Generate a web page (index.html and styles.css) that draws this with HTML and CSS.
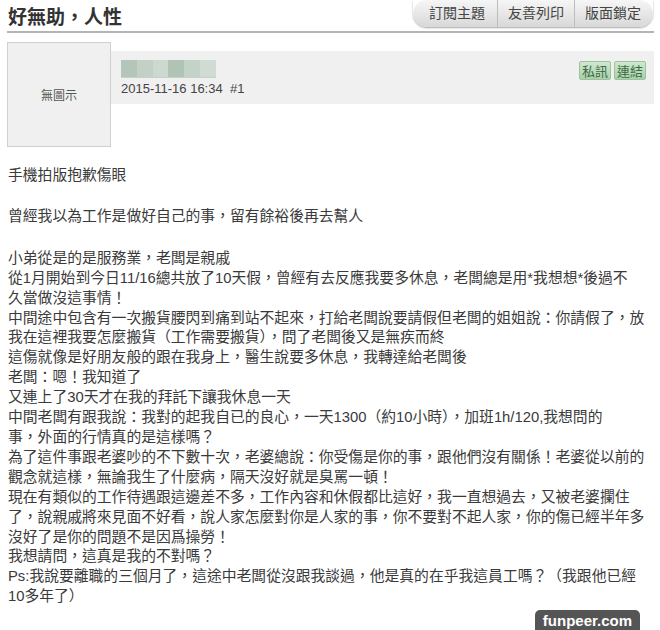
FILE: index.html
```html
<!DOCTYPE html>
<html lang="zh-Hant">
<head>
    <meta charset="UTF-8">
    <title>好無助，人性</title>
    <link rel="stylesheet" href="styles.css">
</head>
<body>
    <div class="page">
        <div class="topic-head">
            <h1 class="topic-title">好無助，人性</h1>
            <div class="tools">
                <a class="tool">訂閱主題</a>
                <a class="tool">友善列印</a>
                <a class="tool">版面鎖定</a>
            </div>
        </div>

        <div class="post">
            <div class="avatar">無圖示</div>
            <div class="post-bar">
                <div class="author">
                    <div class="name-blur">
                        <span class="b1"></span><span class="b2"></span><span class="b3"></span><span class="b4"></span><span class="b5"></span><span class="b6"></span>
                    </div>
                    <div class="post-date">2015-11-16 16:34&nbsp; #1</div>
                </div>
                <div class="post-actions">
                    <a class="act">私訊</a>
                    <a class="act">連結</a>
                </div>
            </div>
        </div>

        <div class="post-body">
            <p>手機拍版抱歉傷眼</p>
            <p>曾經我以為工作是做好自己的事，留有餘裕後再去幫人</p>
            <p>
                小弟從是的是服務業，老闆是親戚<br>
                從1月開始到今日11/16總共放了10天假，曾經有去反應我要多休息，老闆總是用*我想想*後過不<br>
                久當做沒這事情！<br>
                中間途中包含有一次搬貨腰閃到痛到站不起來，打給老闆說要請假但老闆的姐姐說：你請假了，放<br>
                我在這裡我要怎麼搬貨（工作需要搬貨），問了老闆後又是無疾而終<br>
                這傷就像是好朋友般的跟在我身上，醫生說要多休息，我轉達給老闆後<br>
                老闆：嗯！我知道了<br>
                又連上了30天才在我的拜託下讓我休息一天<br>
                中間老闆有跟我說：我對的起我自已的良心，一天1300（約10小時），加班1h/120,我想問的<br>
                事，外面的行情真的是這樣嗎？<br>
                為了這件事跟老婆吵的不下數十次，老婆總說：你受傷是你的事，跟他們沒有關係！老婆從以前的<br>
                觀念就這樣，無論我生了什麼病，隔天沒好就是臭罵一頓！<br>
                現在有類似的工作待遇跟這邊差不多，工作內容和休假都比這好，我一直想過去，又被老婆攔住<br>
                了，說親戚將來見面不好看，說人家怎麼對你是人家的事，你不要對不起人家，你的傷已經半年多<br>
                沒好了是你的問題不是因爲操勞！<br>
                我想請問，這真是我的不對嗎？<br>
                Ps:我說要離職的三個月了，這途中老闆從沒跟我談過，他是真的在乎我這員工嗎？（我跟他已經<br>
                10多年了）
            </p>
        </div>
    </div>

    <div class="watermark">funpeer.com</div>
</body>
</html>
```

FILE: styles.css
```css
body {
    margin: 0;
    background-color: #fff;
    color: #333;
    font-family: "Liberation Sans", "Noto Sans CJK TC", sans-serif;
}

.page {
    padding: 0 6px 0 7px;
}

.topic-head {
    display: flex;
    justify-content: space-between;
    align-items: flex-start;
    border-bottom: 2px solid #b4b4b4;
    height: 31px;
}

.topic-title {
    margin: 7px 0 0 1px;
    font-size: 19px;
    line-height: 22px;
    font-weight: bold;
    color: #333;
}

.tools {
    display: flex;
    margin-right: 1px;
    border-radius: 0 0 14px 14px;
    box-shadow: 0 1px 2px rgba(0, 0, 0, 0.35);
}

.tool {
    display: block;
    height: 27px;
    line-height: 26px;
    width: 76px;
    text-align: center;
    font-size: 14px;
    color: #444;
    background: linear-gradient(#f6f6f6, #d8d8d8);
    border-right: 1px solid #bdbdbd;
}

.tool:first-child {
    width: 80px;
    padding-left: 4px;
    border-radius: 14px 0 0 14px;
}

.tool:last-child {
    width: 76px;
    padding-right: 2px;
    border-right: none;
    border-radius: 0 14px 14px 0;
}

.post {
    display: flex;
    align-items: flex-start;
    margin-top: 9px;
}

.avatar {
    width: 102px;
    height: 103px;
    flex-shrink: 0;
    border: 1px solid #d0d0d0;
    background-color: #f0f0f0;
    display: flex;
    align-items: center;
    justify-content: center;
    font-size: 12px;
    color: #555;
    font-family: "Noto Sans CJK TC", sans-serif;
}

.post-bar {
    flex: 1;
    margin-top: 9px;
    height: 53px;
    background-color: #f0f0f0;
    display: flex;
    justify-content: space-between;
    align-items: flex-start;
}

.author {
    padding: 9px 0 0 10px;
}

.name-blur {
    display: flex;
    width: 95px;
    height: 17px;
    border-bottom: 1px solid #c8d0cc;
}

.name-blur span {
    flex: 1;
}

.name-blur .b1 { background-color: #b4c6b9; }
.name-blur .b2 { background-color: #c2d0c6; }
.name-blur .b3 { background-color: #ccd8d0; }
.name-blur .b4 { background-color: #b0c4b6; }
.name-blur .b5 { background-color: #c4d3c8; }
.name-blur .b6 { background-color: #d0dbd3; }

.post-date {
    margin-top: 3px;
    font-size: 13px;
    color: #444;
}

.post-actions {
    display: flex;
    gap: 3px;
    padding: 10px 8px 0 0;
}

.act {
    display: block;
    height: 17px;
    line-height: 17px;
    padding: 0 2px;
    font-size: 13px;
    color: #3e6b45;
    background: linear-gradient(#cfe8cf, #a9d1aa);
    border: 1px solid #9cc39d;
    border-radius: 2px;
    font-family: "Noto Sans CJK TC", sans-serif;
}

.post-body {
    margin: 19px 0 0 1px;
    font-size: 14.8px;
    line-height: 19.9px;
    color: #3a3a3a;
    white-space: nowrap;
}

.post-body p {
    margin: 0 0 21.5px;
}

.watermark {
    position: fixed;
    right: 20px;
    bottom: 0;
    padding: 0 8px;
    height: 20px;
    line-height: 21px;
    background-color: #555;
    color: #fff;
    font-weight: bold;
    font-size: 15px;
    border-radius: 5px 5px 0 0;
}
```
